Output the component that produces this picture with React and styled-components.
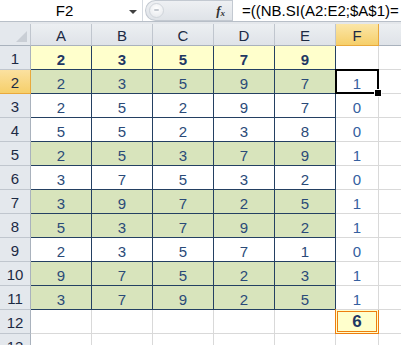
import React from 'react';
import styled, { createGlobalStyle, css } from 'styled-components';

const GlobalStyle = createGlobalStyle`
    html, body {
        margin: 0;
        padding: 0;
        background: #ffffff;
    }
    body {
        width: 401px;
        height: 345px;
        overflow: hidden;
        font-family: "Liberation Sans", Arial, sans-serif;
    }
`;

// G is only partly in view, its label falls outside the window
const COLS = ['A', 'B', 'C', 'D', 'E', 'F', ''];

// row fills: y = yellow, g = green, w = white
const ROWS = [
    { fill: 'y', values: [2, 3, 5, 7, 9], result: '', bold: true },
    { fill: 'g', values: [2, 3, 5, 9, 7], result: 1 },
    { fill: 'w', values: [2, 5, 2, 9, 7], result: 0 },
    { fill: 'w', values: [5, 5, 2, 3, 8], result: 0 },
    { fill: 'g', values: [2, 5, 3, 7, 9], result: 1 },
    { fill: 'w', values: [3, 7, 5, 3, 2], result: 0 },
    { fill: 'g', values: [3, 9, 7, 2, 5], result: 1 },
    { fill: 'g', values: [5, 3, 7, 9, 2], result: 1 },
    { fill: 'w', values: [2, 3, 5, 7, 1], result: 0 },
    { fill: 'g', values: [9, 7, 5, 2, 3], result: 1 },
    { fill: 'g', values: [3, 7, 9, 2, 5], result: 1 },
];

const FILLS = { y: '#ffffcc', g: '#d8e4bc', w: '#ffffff' };

const App = () => {
    return (
        <>
            <GlobalStyle />
            <Window>
                <FormulaBar>
                    <NameBox>
                        <NameText>F2</NameText>
                        <DropArrow />
                    </NameBox>
                    <Splitter>
                        <SplitDot />
                        <FxLabel>
                            f<sub>x</sub>
                        </FxLabel>
                    </Splitter>
                    <FormulaInput>=((NB.SI(A2:E2;$A$1)=</FormulaInput>
                </FormulaBar>
                <Spacer />
                <Sheet>
                    <Corner>
                        <CornerTriangle />
                    </Corner>
                    {COLS.map((c, k) => (
                        <ColHeader key={k} $active={c === 'F'}>
                            {c}
                        </ColHeader>
                    ))}

                    {ROWS.map((row, i) => (
                        <React.Fragment key={i}>
                            <RowHeader $active={i === 1}>{i + 1}</RowHeader>
                            {row.values.map((v, j) => (
                                <DataCell key={j} $fill={FILLS[row.fill]} $bold={row.bold}>
                                    {v}
                                </DataCell>
                            ))}
                            <ResultCell $selected={i === 1}>{row.result}</ResultCell>
                            <Cell />
                        </React.Fragment>
                    ))}

                    <RowHeader>12</RowHeader>
                    <Cell />
                    <Cell />
                    <Cell />
                    <Cell />
                    <Cell />
                    <TotalCell>6</TotalCell>
                    <Cell />

                    <RowHeader>13</RowHeader>
                    {COLS.map((c, k) => (
                        <Cell key={k} />
                    ))}
                </Sheet>
            </Window>
        </>
    );
};

export default App;

const Window = styled.div`
    width: 401px;
    height: 345px;
    overflow: hidden;
    background: #ffffff;
`;

const FormulaBar = styled.div`
    height: 22px;
    display: flex;
    align-items: stretch;
    box-sizing: border-box;
    border-bottom: 1px solid #b8bfc8;
    background: #ffffff;
`;

const NameBox = styled.div`
    width: 143px;
    display: flex;
    align-items: center;
    box-sizing: border-box;
    padding: 0 5px 0 0;
    border-right: 1px solid #d5dae0;
`;

const NameText = styled.span`
    flex: 1;
    text-align: center;
    font-size: 15px;
    color: #000000;
`;

const DropArrow = styled.span`
    width: 0;
    height: 0;
    border-left: 4px solid transparent;
    border-right: 4px solid transparent;
    border-top: 4px solid #404040;
    margin-top: 2px;
`;

const Splitter = styled.div`
    width: 87px;
    margin-left: 2px;
    display: flex;
    align-items: center;
    justify-content: space-between;
    box-sizing: border-box;
    padding: 0 7px 0 3px;
    background: linear-gradient(#eef0f3, #dfe3e8);
    border: 1px solid #c3c9d1;
    border-right: none;
    border-radius: 11px 0 0 11px;
`;

const SplitDot = styled.span`
    width: 13px;
    height: 13px;
    border-radius: 50%;
    background: radial-gradient(circle at 50% 35%, #ffffff, #e3e6ea);
    border: 1px solid #d0d5db;
    position: relative;

    &::after {
        content: '';
        position: absolute;
        left: 4px;
        top: 5px;
        width: 5px;
        height: 2px;
        background: #c3c8cf;
        border-radius: 1px;
    }
`;

const FxLabel = styled.span`
    font-family: "Liberation Serif", "Times New Roman", serif;
    font-style: italic;
    font-weight: bold;
    font-size: 13px;
    color: #333333;
    line-height: 1;

    sub {
        font-size: 9px;
        vertical-align: -1px;
    }
`;

const FormulaInput = styled.div`
    flex: 1;
    display: flex;
    align-items: center;
    box-sizing: border-box;
    padding-left: 9px;
    border-left: 1px solid #c3c9d1;
    white-space: nowrap;
    overflow: hidden;
    font-size: 15px;
    color: #000000;
`;

const Spacer = styled.div`
    height: 2px;
    background: #e4e7eb;
`;

const Sheet = styled.div`
    display: grid;
    grid-template-columns: 31px repeat(5, 61px) 43px 64px;
    grid-template-rows: 22px repeat(13, 24px);
    width: 444px;
`;

const headerBase = css`
    box-sizing: border-box;
    display: flex;
    align-items: center;
    justify-content: center;
    font-size: 15px;
    color: #1c2a44;
    padding-top: 2px;
`;

const Corner = styled.div`
    position: relative;
    box-sizing: border-box;
    background: #e4e8ed;
    border-right: 1px solid #c0c6ce;
    border-bottom: 1px solid #a9b2bd;
`;

const CornerTriangle = styled.span`
    position: absolute;
    right: 3px;
    bottom: 3px;
    width: 0;
    height: 0;
    border-left: 11px solid transparent;
    border-bottom: 11px solid #c9ced5;
`;

const ColHeader = styled.div`
    ${headerBase}
    background: ${({ $active }) =>
        $active ? 'linear-gradient(#fbe6a8, #f6cf6a)' : 'linear-gradient(#eceff2, #dfe3e8)'};
    border-right: 1px solid ${({ $active }) => ($active ? '#e9a93c' : '#c0c6ce')};
    border-bottom: 1px solid ${({ $active }) => ($active ? '#e9a93c' : '#a9b2bd')};
`;

const RowHeader = styled.div`
    ${headerBase}
    background: ${({ $active }) => ($active ? 'linear-gradient(#fbe1a0, #f6cf6a)' : '#e4e8ed')};
    border-right: 1px solid ${({ $active }) => ($active ? '#e9a93c' : '#a9b2bd')};
    border-bottom: 1px solid ${({ $active }) => ($active ? '#e9a93c' : '#c0c6ce')};
`;

const Cell = styled.div`
    box-sizing: border-box;
    border-right: 1px solid #d9d9d9;
    border-bottom: 1px solid #d9d9d9;
    background: #ffffff;
`;

const valueText = css`
    box-sizing: border-box;
    display: flex;
    align-items: center;
    justify-content: center;
    padding-top: 3px;
    font-size: 15px;
`;

const DataCell = styled.div`
    ${valueText}
    background: ${({ $fill }) => $fill};
    border-right: 1px solid #244062;
    border-bottom: 1px solid #244062;
    color: ${({ $bold }) => ($bold ? '#1f3864' : '#2a4a78')};
    font-weight: ${({ $bold }) => ($bold ? 'bold' : 'normal')};
`;

const ResultCell = styled.div`
    ${valueText}
    position: relative;
    background: #ffffff;
    border-right: 1px solid #d9d9d9;
    border-bottom: 1px solid #d9d9d9;
    color: #3560a0;

    ${({ $selected }) =>
        $selected &&
        css`
            &::after {
                content: '';
                position: absolute;
                left: -1px;
                top: -1px;
                right: -1px;
                bottom: -1px;
                border: 2px solid #000000;
            }
            &::before {
                content: '';
                position: absolute;
                right: -4px;
                bottom: -4px;
                width: 6px;
                height: 6px;
                background: #000000;
                border: 1px solid #ffffff;
                z-index: 2;
            }
        `}
`;

const TotalCell = styled.div`
    ${valueText}
    padding-top: 1px;
    background: #ffffcc;
    border: 3px double #ed7d0f;
    margin: -1px 0 0 -1px;
    font-size: 17px;
    font-weight: bold;
    color: #1f3864;
`;
